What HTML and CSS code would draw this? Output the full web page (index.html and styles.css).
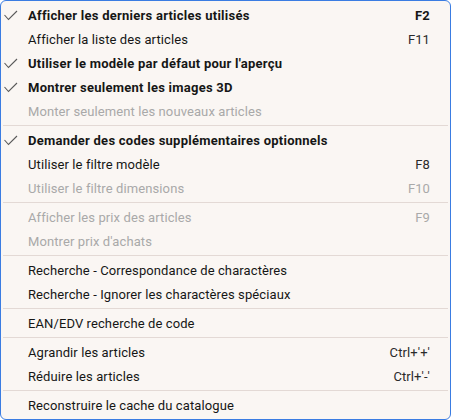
FILE: index.html
```html
<!DOCTYPE html>
<html lang="fr">
<head>
<meta charset="utf-8">
<link rel="stylesheet" href="styles.css">
</head>
<body>
<ul class="menu">
  <li class="item bold"><span class="check"><svg viewBox="0 0 24 24" width="24" height="24"><polyline points="3.5,12 7.5,16.5 16,8"/></svg></span><span class="label">Afficher les derniers articles utilisés</span><span class="key">F2</span></li>
  <li class="item"><span class="check"></span><span class="label">Afficher la liste des articles</span><span class="key">F11</span></li>
  <li class="item bold"><span class="check"><svg viewBox="0 0 24 24" width="24" height="24"><polyline points="3.5,12 7.5,16.5 16,8"/></svg></span><span class="label">Utiliser le modèle par défaut pour l'aperçu</span><span class="key"></span></li>
  <li class="item bold"><span class="check"><svg viewBox="0 0 24 24" width="24" height="24"><polyline points="3.5,12 7.5,16.5 16,8"/></svg></span><span class="label">Montrer seulement les images 3D</span><span class="key"></span></li>
  <li class="item disabled"><span class="check"></span><span class="label">Monter seulement les nouveaux articles</span><span class="key"></span></li>
  <li class="sep"></li>
  <li class="item bold"><span class="check"><svg viewBox="0 0 24 24" width="24" height="24"><polyline points="3.5,12 7.5,16.5 16,8"/></svg></span><span class="label">Demander des codes supplémentaires optionnels</span><span class="key"></span></li>
  <li class="item"><span class="check"></span><span class="label">Utiliser le filtre modèle</span><span class="key">F8</span></li>
  <li class="item disabled"><span class="check"></span><span class="label">Utiliser le filtre dimensions</span><span class="key">F10</span></li>
  <li class="sep"></li>
  <li class="item disabled"><span class="check"></span><span class="label">Afficher les prix des articles</span><span class="key">F9</span></li>
  <li class="item disabled"><span class="check"></span><span class="label">Montrer prix d'achats</span><span class="key"></span></li>
  <li class="sep"></li>
  <li class="item"><span class="check"></span><span class="label">Recherche - Correspondance de charactères</span><span class="key"></span></li>
  <li class="item"><span class="check"></span><span class="label">Recherche - Ignorer les charactères spéciaux</span><span class="key"></span></li>
  <li class="sep"></li>
  <li class="item"><span class="check"></span><span class="label">EAN/EDV recherche de code</span><span class="key"></span></li>
  <li class="sep"></li>
  <li class="item"><span class="check"></span><span class="label">Agrandir les articles</span><span class="key">Ctrl+'+'</span></li>
  <li class="item"><span class="check"></span><span class="label">Réduire les articles</span><span class="key">Ctrl+'-'</span></li>
  <li class="sep"></li>
  <li class="item"><span class="check"></span><span class="label">Reconstruire le cache du catalogue</span><span class="key"></span></li>
</ul>
</body>
</html>
```
FILE: styles.css
```css
* { box-sizing: border-box; }
html, body { margin: 0; padding: 0; background: #ffffff; }
body { width: 451px; height: 420px; }
.menu {
  list-style: none;
  margin: 0;
  padding: 2px 0;
  width: 451px;
  height: 420px;
  background: #faf6f3;
  border: 1px solid #3a7ce2;
  border-radius: 6px;
  font-family: Roboto, "Noto Sans", sans-serif;
  font-size: 13px;
  letter-spacing: 0.1px;
  color: #161616;
}
.item {
  display: flex;
  align-items: center;
  height: 24px;
  padding-right: 20px;
}
.check {
  width: 27px;
  height: 24px;
  flex: none;
}
.check svg { display: block; }
.check polyline {
  fill: none;
  stroke: #5a5a5a;
  stroke-width: 1.1;
}
.label { flex: 1; white-space: nowrap; padding-top: 1px; }
.key { flex: none; white-space: nowrap; color: #2a2a2a; padding-top: 1px; }
.bold .label, .bold .key {
  font-weight: 700;
  letter-spacing: 0.25px;
}
.bold .key { color: #161616; }
.disabled .label, .disabled .key { color: #a9a9a9; }
.sep {
  height: 1px;
  margin: 2px 2px;
  background: #e3d9d5;
}
```
